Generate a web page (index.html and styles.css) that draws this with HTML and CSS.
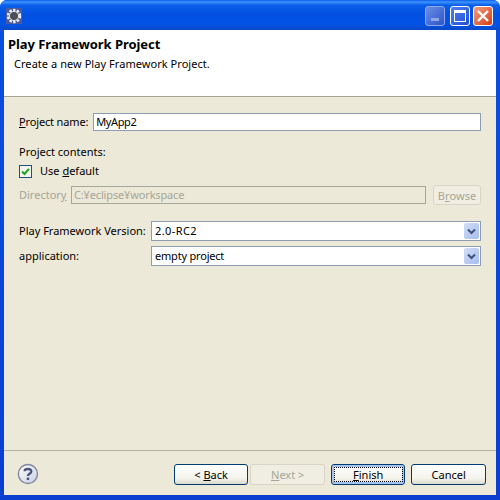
FILE: index.html
```html
<!DOCTYPE html>
<html lang="en">
<head>
<meta charset="utf-8">
<title>Play Framework Project</title>
<link rel="stylesheet" href="styles.css">
</head>
<body>
<div class="window">
  <div class="titlebar">
    <svg class="app-icon" width="16" height="16" viewBox="0 0 16 16">
      <rect width="16" height="16" fill="#4a5a9c"/>
      <circle cx="8" cy="8" r="6" fill="none" stroke="#f2f2f2" stroke-width="2.4" stroke-dasharray="2.4 1.4"/>
      <circle cx="8" cy="8" r="4.6" fill="#4d4f5c" stroke="#e8e8e8" stroke-width="1"/>
    </svg>
    <div class="winbtns">
      <div class="winbtn min"><span class="min-glyph"></span></div>
      <div class="winbtn max"><span class="max-glyph"></span></div>
      <div class="winbtn close">
        <svg width="14" height="14" viewBox="0 0 14 14"><path d="M2 2 12 12M12 2 2 12" stroke="#fff" stroke-width="2.4"/></svg>
      </div>
    </div>
  </div>
  <div class="client">
    <header class="banner">
      <h1 class="banner-title">Play Framework Project</h1>
      <p class="banner-desc">Create a new Play Framework Project.</p>
    </header>
    <main class="form">
      <div class="row name-row">
        <label class="lbl name-lbl"><u>P</u>roject name:</label>
        <div class="field grow name-field">MyApp2</div>
      </div>
      <div class="lbl contents">Project contents:</div>
      <div class="check-row">
        <span class="check">
          <svg width="9" height="9" viewBox="0 0 9 9"><path d="M1 4.5 3.5 7 8 1.8" fill="none" stroke="#21a121" stroke-width="2"/></svg>
        </span>
        <span class="lbl">Use <u>d</u>efault</span>
      </div>
      <div class="row dir-row">
        <label class="lbl disabled">Director<u>y</u></label>
        <div class="field grow dis">C:¥eclipse¥workspace</div>
        <div class="btn browse">B<u>r</u>owse</div>
      </div>
      <div class="row combo-row first">
        <label class="lbl combo-lbl">Play Framework Version:</label>
        <div class="field combo grow version">2.0-RC2<span class="arrow"><svg width="9" height="7" viewBox="0 0 9 7"><path d="M1 1.5 4.5 5 8 1.5" fill="none" stroke="#3f527c" stroke-width="2"/></svg></span></div>
      </div>
      <div class="row combo-row">
        <label class="lbl combo-lbl">application:</label>
        <div class="field combo grow app">empty project<span class="arrow"><svg width="9" height="7" viewBox="0 0 9 7"><path d="M1 1.5 4.5 5 8 1.5" fill="none" stroke="#3f527c" stroke-width="2"/></svg></span></div>
      </div>
    </main>
    <footer class="footer">
      <svg class="help" width="22" height="22" viewBox="0 0 22 22">
        <defs><linearGradient id="hg" x1="0" y1="0" x2="1" y2="1"><stop offset="0" stop-color="#ffffff"/><stop offset="1" stop-color="#c9cfe2"/></linearGradient></defs>
        <circle cx="11" cy="11" r="9.6" fill="url(#hg)" stroke="#8088a0" stroke-width="1.4"/>
        <path d="M7.6 8.2C7.8 5.2 14.4 5.2 14.4 8.4 14.4 10.8 11 10.6 11 13" fill="none" stroke="#4c5578" stroke-width="2.3"/>
        <rect x="9.8" y="14.6" width="2.5" height="2.5" fill="#4c5578"/>
      </svg>
      <div class="btn nav"><span>&lt; <u>B</u>ack</span></div>
      <div class="btn nav off"><span><u>N</u>ext &gt;</span></div>
      <div class="btn nav default"><span class="focus"><u>F</u>inish</span></div>
      <div class="btn nav cancel"><span>Cancel</span></div>
    </footer>
  </div>
</div>
</body>
</html>
```
FILE: styles.css
```css
* { box-sizing: border-box; }
html, body { margin: 0; padding: 0; }
body { width: 500px; height: 500px; overflow: hidden; font-family: "Noto Sans", "Liberation Sans", sans-serif; font-size: 11px; color: #000; }
u { text-underline-offset: 1px; }
.window { width: 500px; height: 500px; display: flex; flex-direction: column; background: linear-gradient(#0a50e0, #0a3fd0); border-radius: 7px 7px 0 0; }
.titlebar { height: 30px; flex: none; display: flex; align-items: center; justify-content: space-between; padding: 2px 7px 0 6px; background: linear-gradient(#0a5ae6 0, #3d95ff 2px, #0a5fe8 5px, #0250e0 14px, #0352e6 24px, #0a49c8 30px); border-radius: 7px 7px 0 0; }
.app-icon { display: block; }
.winbtns { display: flex; gap: 3px; }
.winbtn { width: 20px; height: 20px; border: 1px solid #fff; border-radius: 3px; display: flex; align-items: center; justify-content: center; }
.min { background: linear-gradient(135deg, #6a8ee8, #2c55c8); border-color: #8ea8e8; width: 20px; margin-right: 2px; align-items: flex-end; padding-bottom: 4px; }
.min-glyph { width: 8px; height: 3px; background: #8fa8e8; }
.max { background: linear-gradient(135deg, #4f7ff0, #1f50d8); }
.max-glyph { width: 12px; height: 12px; border: 1px solid #fff; border-top-width: 3px; }
.close { background: linear-gradient(135deg, #f0a080, #d83c14); }
.client { flex: 1; margin: 0 4px 5px; background: #ece9d8; display: flex; flex-direction: column; min-height: 0; }
.banner { height: 67px; flex: none; background: #fff; border-bottom: 1px solid #a8a598; padding: 6px 0 0 4px; }
.banner-title { margin: 0; font-size: 13px; line-height: 16px; font-weight: 700; letter-spacing: -0.05px; }
.banner-desc { margin: 5px 0 0 6px; font-size: 11px; line-height: 14px; letter-spacing: 0.05px; }
.form { flex: 1; padding: 16px 15px 0 15px; }
.row { display: flex; align-items: center; }
.lbl { white-space: nowrap; line-height: 14px; }
.name-row { height: 18px; gap: 5px; }
.name-lbl { letter-spacing: -0.15px; }
.field { height: 100%; background: #fff; border: 1px solid #8d9cb0; padding-left: 3px; line-height: 16px; white-space: nowrap; outline: 0; }
.grow { flex: 1; min-width: 0; }
.name-field { padding-left: 2px; letter-spacing: -0.4px; }
.contents { margin-top: 14px; }
.check-row { display: flex; align-items: center; gap: 8px; margin-top: 5px; height: 14px; }
.check { width: 13px; height: 13px; background: #f4f4ee; border: 1px solid #1c5180; display: flex; align-items: center; justify-content: center; }
.dir-row { height: 20px; margin-top: 7px; gap: 5px; }
.dir-row .field { height: 18px; background: #ece9d8; border-color: #a3a79c; color: #a6a597; padding-left: 2px; letter-spacing: -0.15px; }
.disabled { color: #a6a597; }
.dir-row .lbl { width: 47px; }
.btn { border: 1px solid #003c74; border-radius: 3px; background: linear-gradient(#fff, #f4f3ec 70%, #dcd8cc); display: flex; align-items: center; justify-content: center; white-space: nowrap; }
.browse { width: 48px; height: 20px; margin-left: 2px; border-color: #d8d5c6; background: #f0eee2; color: #a6a597; }
.combo-row { height: 20px; margin-top: 5px; }
.combo-row.first { margin-top: 16px; }
.combo-lbl { width: 132px; flex: none; }
.combo { position: relative; line-height: 18px; }
.version { letter-spacing: 0.4px; }
.app { letter-spacing: -0.2px; }
.arrow { position: absolute; right: 1px; top: 1px; width: 15px; height: 16px; background: linear-gradient(135deg, #d2def6, #a6bdee); border-radius: 2px; display: flex; align-items: center; justify-content: center; }
.footer { height: 45px; flex: none; border-top: 1px solid #b5b2a4; display: flex; align-items: flex-start; padding: 13px 10px 0 13px; }
.help { display: block; margin: -1px 0 0 0; }
.nav { width: 75px; height: 21px; margin-left: 2px; }
.help + .nav { margin-left: 135px; }
.off { border-color: #d8d5c6; background: #f0eee2; color: #a6a597; }
.default { margin-left: 6px; box-shadow: inset 0 0 0 2px #a9c4ec; }
.focus { display: block; width: 69px; height: 15px; line-height: 13px; text-align: center; border: 1px dotted #000; }
.cancel { margin-left: 6px; }
```
